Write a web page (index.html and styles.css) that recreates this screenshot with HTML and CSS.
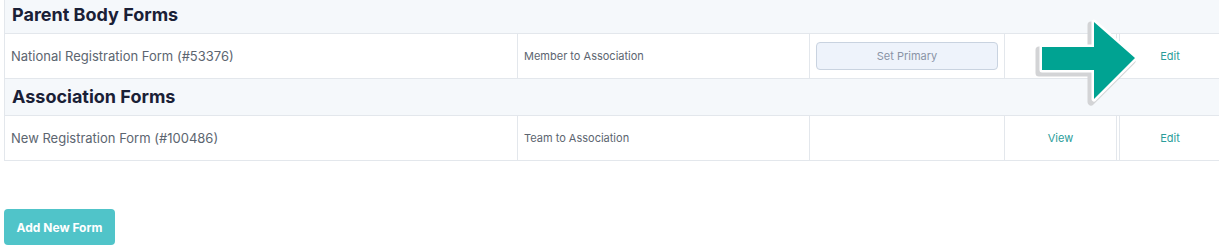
FILE: index.html
```html
<!DOCTYPE html>
<html lang="en">
<head>
  <meta charset="UTF-8">
  <title>Forms</title>
  <link rel="stylesheet" href="styles.css">
</head>
<body>
  <div class="forms">
    <div class="section-title">Parent Body Forms</div>
    <div class="form-row">
      <div class="cell name">National Registration Form (#53376)</div>
      <div class="cell type">Member to Association</div>
      <div class="cell primary"><button class="btn-primary">Set Primary</button></div>
      <div class="cell link"></div>
      <div class="cell link edge"><a href="#">Edit</a></div>
    </div>
    <div class="section-title">Association Forms</div>
    <div class="form-row">
      <div class="cell name">New Registration Form (#100486)</div>
      <div class="cell type">Team to Association</div>
      <div class="cell primary"></div>
      <div class="cell link"><a href="#">View</a></div>
      <div class="cell link edge"><a href="#">Edit</a></div>
    </div>
  </div>

  <button class="btn-add">Add New Form</button>

  <!-- callout arrow pointing at Edit -->
  <svg class="arrow" width="110" height="90" viewBox="0 0 110 90">
    <polygon points="8,31 60,31 60,6 101,42 60,83 60,54 8,54" fill="#d3d4d6" stroke="#d3d4d6" stroke-width="7" stroke-linejoin="round" transform="translate(-3,3)"/>
    <polygon points="8,31 60,31 60,6 101,42 60,83 60,54 8,54" fill="#ffffff" stroke="#ffffff" stroke-width="5" stroke-linejoin="round"/>
    <polygon points="8,31 60,31 60,6 101,42 60,83 60,54 8,54" fill="#00a392"/>
  </svg>
</body>
</html>
```

FILE: styles.css
```css
body {
  margin: 0;
  padding: 0 0 0 4px;
  background: #fff;
  font-family: Inter, 'Noto Sans', Arial, sans-serif;
  overflow: hidden;
  position: relative;
  height: 248px;
}
.forms {
  width: 1230px;
  margin-top: -3px;
  border-left: 1px solid #e3e7ec;
}
.section-title {
  background: #f5f8fb;
  border-bottom: 1px solid #e3e7ec;
  height: 36px;
  line-height: 36px;
  padding-left: 7px;
  font-size: 18px;
  font-weight: 700;
  color: #1a2036;
}
.form-row {
  display: grid;
  grid-template-columns: 513px 292px 195px 112px 1fr;
  height: 44px;
  border-bottom: 1px solid #e3e7ec;
}
.cell {
  display: flex;
  align-items: center;
  border-right: 1px solid #e3e7ec;
  box-sizing: border-box;
}
.name {
  padding-left: 6px;
  font-size: 13px;
  color: #5c6570;
}
.type {
  padding-left: 6px;
  font-size: 11px;
  color: #5c6570;
}
.primary {
  padding: 0 6px;
}
.btn-primary {
  width: 182px;
  height: 28px;
  background: #eef3fb;
  border: 1px solid #c9d3e0;
  border-radius: 4px;
  color: #8a94a6;
  font-family: inherit;
  font-size: 11px;
}
.link {
  justify-content: center;
}
.link a {
  color: #2a9d9a;
  text-decoration: none;
  font-size: 11px;
}
.edge {
  border-left: 1px solid #e3e7ec;
  margin-left: 2px;
  padding-right: 14px;
}
.btn-add {
  margin-top: 48px;
  width: 111px;
  height: 36px;
  background: #50c4c9;
  border: none;
  border-radius: 4px;
  color: #fff;
  font-family: inherit;
  font-size: 12px;
  font-weight: 700;
}
.arrow {
  position: absolute;
  left: 1034px;
  top: 16px;
}
```
